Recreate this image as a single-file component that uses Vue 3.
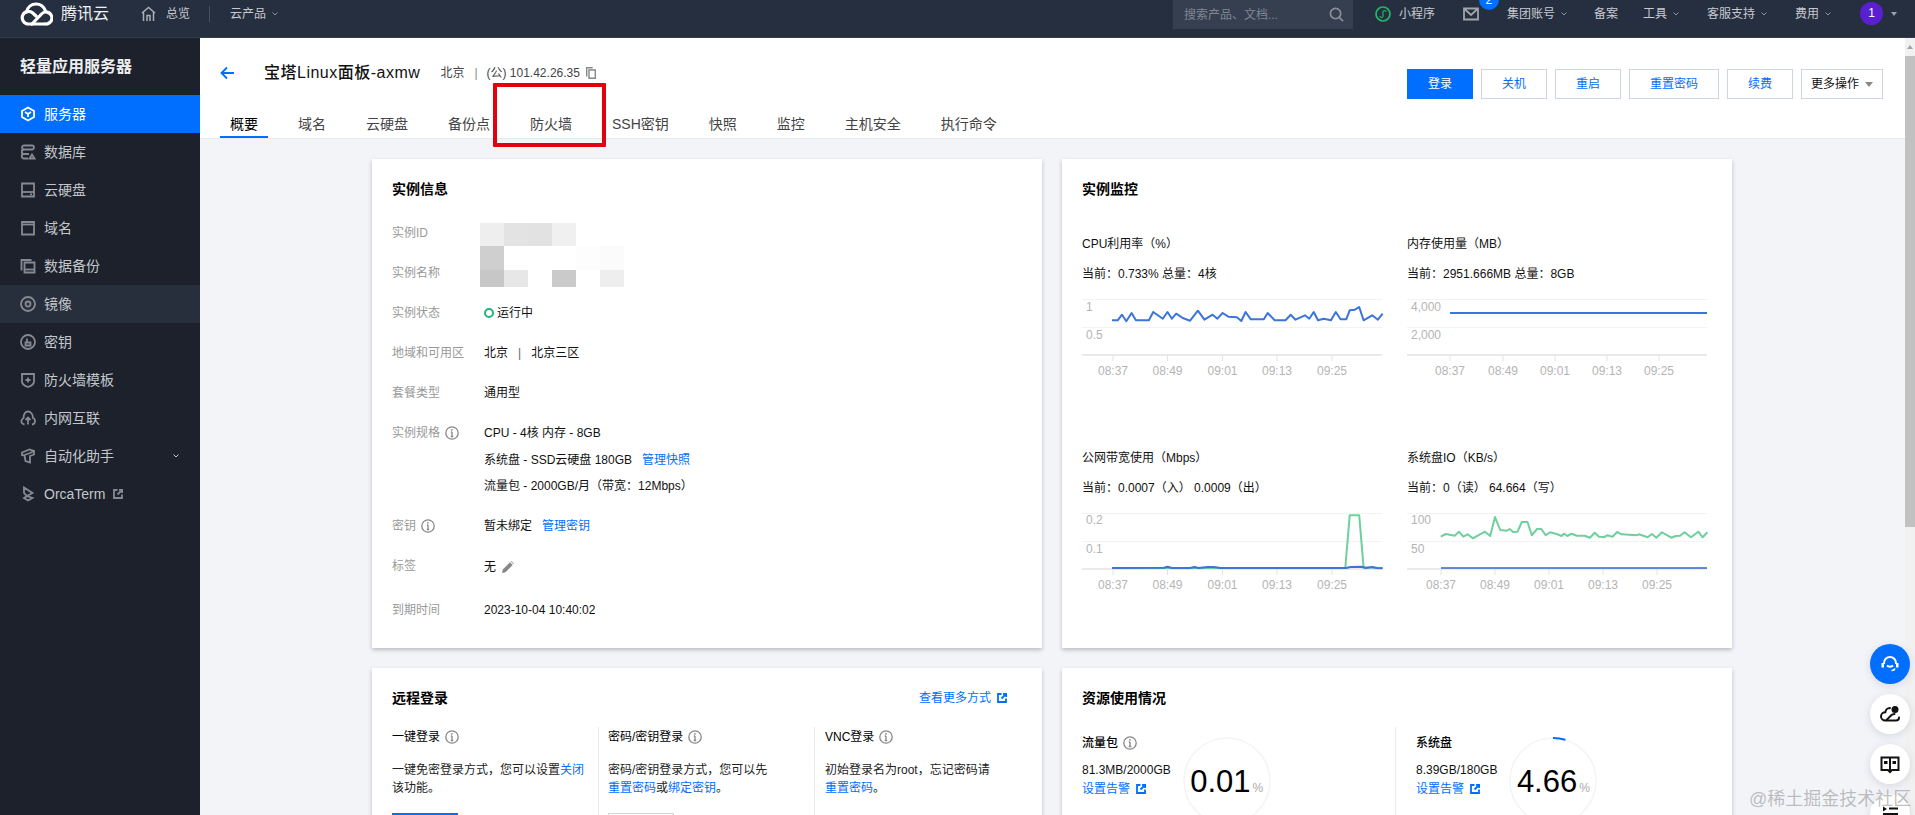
<script setup>
const menu = [
  { name: '服务器', active: true, icon: ['M8 1.5 14 5v6l-6 3.5L2 11V5z', 'M5 6l3 2 3-2M8 8v3'] },
  { name: '数据库', icon: ['M4 1.5h8a2 2 0 0 1 0 4H4a2 2 0 0 1 0-4z', 'M4 5.5a2.2 2.2 0 0 0 0 4.5h5', 'M4 10a2.2 2.2 0 0 0 0 4.5h4', 'M12 10.5l2.5 4h-5z'] },
  { name: '云硬盘', icon: ['M2 1.5h12v13H2z', 'M2 10h12', 'M10 12.3h2'] },
  { name: '域名', icon: ['M2 2h12v12.5H2z', 'M2 4.5h12', 'M5 1v2M11 1v2'] },
  { name: '数据备份', icon: ['M1.5 12.5V2h10', 'M4.5 4.5h10v10h-10z', 'M4.5 11.5h10'] },
  { name: '镜像', hover: true, icon: ['M8 1a7 7 0 1 0 0 14A7 7 0 1 0 8 1z', 'M8 5.5a2.5 2.5 0 1 0 0 5 2.5 2.5 0 1 0 0-5z'] },
  { name: '密钥', icon: ['M8 1a7 7 0 1 0 0 14A7 7 0 1 0 8 1z', 'M7 4.5v3.5', 'M5.5 8.5h5v3h-5z'] },
  { name: '防火墙模板', icon: ['M2 2h12v7.5c0 2.5-3 4.5-6 5.5-3-1-6-3-6-5.5z', 'M8 5.5v5M5.5 8h5'] },
  { name: '内网互联', icon: ['M4.5 14.5C2 14 1 12.5 1.5 10.5 2 9 3 8.5 3.5 8 3.5 4 5.5 1.5 8 1.5s5 2.5 5 6.5c1.5.5 2 2 2 3.2 0 1.6-1 3-3 3.3', 'M8 14.5V8M5.5 10 8 7.5l2.5 2.5'] },
  { name: '自动化助手', arrow: true, icon: ['M2 4.5 9.5 1.5 14 3v3.5l-4 1.5v6.5l-4.5-1.5-1-5.5L2 7z', 'M4.5 7 10 5l4-2'] },
  { name: 'OrcaTerm', ext: true, icon: ['M4 1.5 12.5 7 7 10l5.5 2-4.5 2.5L4 12l3-2-3-3z'] }
]

const tabs = ['概要', '域名', '云硬盘', '备份点', '防火墙', 'SSH密钥', '快照', '监控', '主机安全', '执行命令']
const actions = ['关机', '重启', '重置密码', '续费']

// mosaic that hides the instance id and name
const mosaicRows = [
  { h: 23, cells: ['#eeeeee', '#e3e3e3', '#e2e2e2', '#f0f0f0', '#ffffff', '#ffffff'] },
  { h: 24, cells: ['#cfcfcf', '#ffffff', '#ffffff', '#ffffff', '#fdfdfd', '#fbfbfb'] },
  { h: 17, cells: ['#c7c7c7', '#e7e7e7', '#ffffff', '#cacaca', '#ffffff', '#eeeeee'] }
]

// points were read off the reference: [x, y] in crop pixels
const toPoints = (pts, xOff, top) => pts
  .map(([x, y]) => `${(x / 2.306 - xOff).toFixed(1)},${(y / 3 + top).toFixed(1)}`)
  .join(' ')

const cpu = [[120,481],[133,481],[143,464],[153,484],[165,459],[175,481],[205,481],[215,456],[237,476],[248,456],[258,476],[268,461],[283,474],[300,482],[318,452],[333,479],[352,464],[363,476],[375,459],[388,470],[408,472],[418,483],[428,456],[440,478],[470,478],[479,459],[495,481],[520,481],[532,464],[543,479],[565,466],[575,476],[585,456],[595,481],[608,476],[625,481],[636,456],[647,478],[660,478],[668,451],[680,449],[690,441],[700,481],[720,466],[733,479],[744,461]]
const netOut = [[120,414],[658,414],[668,256],[690,256],[700,412],[744,414]]
const netIn = [[120,414],[240,413],[248,410],[258,414],[300,414],[310,411],[320,414],[340,411],[355,411],[370,414],[660,414],[670,411],[695,410],[705,414],[720,411],[730,414],[744,415]]
const diskWrite = [[878,320],[890,312],[910,317],[920,305],[930,320],[940,313],[952,325],[980,305],[992,318],[1003,261],[1015,300],[1030,302],[1037,297],[1045,306],[1055,305],[1065,276],[1078,276],[1088,316],[1100,297],[1110,297],[1120,316],[1130,307],[1145,312],[1157,318],[1162,311],[1170,318],[1180,311],[1192,317],[1210,317],[1222,323],[1233,308],[1243,320],[1255,321],[1262,316],[1274,320],[1285,306],[1295,313],[1330,316],[1335,313],[1355,322],[1365,312],[1375,323],[1388,307],[1410,323],[1420,318],[1430,317],[1440,307],[1455,322],[1472,305],[1482,322],[1493,307]]

const BLUE = '#3b74dc'
const GREEN = '#6fcf9d'

const charts = [
  {
    title: 'CPU利用率\uFF08%\uFF09',
    sub: '当前\uFF1A0.733% 总量\uFF1A4核',
    yLabels: [['1', 12], ['0.5', 40]],
    ticks: [31, 85.5, 140.5, 195, 250],
    lines: [{ color: BLUE, width: 2, points: toPoints(cpu, 22, -135) }]
  },
  {
    title: '内存使用量\uFF08MB\uFF09',
    sub: '当前\uFF1A2951.666MB 总量\uFF1A8GB',
    yLabels: [['4,000', 12], ['2,000', 40]],
    ticks: [43, 96, 148, 200, 252],
    lines: [{ color: BLUE, width: 2, points: '43,18 300,18' }]
  },
  {
    title: '公网带宽使用\uFF08Mbps\uFF09',
    sub: '当前\uFF1A0.0007\uFF08入\uFF09 0.0009\uFF08出\uFF09',
    yLabels: [['0.2', 11], ['0.1', 40]],
    ticks: [31, 85.5, 140.5, 195, 250],
    lines: [
      { color: GREEN, width: 2, points: toPoints(netOut, 22, -79) },
      { color: BLUE, width: 2, points: toPoints(netIn, 22, -79) }
    ]
  },
  {
    title: '系统盘IO\uFF08KB/s\uFF09',
    sub: '当前\uFF1A0\uFF08读\uFF09 64.664\uFF08写\uFF09',
    yLabels: [['100', 11], ['50', 40]],
    ticks: [34, 88, 142, 196, 250],
    lines: [
      { color: GREEN, width: 2, points: toPoints(diskWrite, 347, -79) },
      { color: '#2f66cc', width: 1.5, points: '34,59 300,59' }
    ]
  }
]
const times = ['08:37', '08:49', '09:01', '09:13', '09:25']
</script>

<template>
  <div class="app">
    <svg class="defs" aria-hidden="true">
      <symbol id="i-info" viewBox="0 0 14 14">
        <circle cx="7" cy="7" r="6.2" fill="none" stroke="#888" stroke-width="1.3" />
        <path d="M7 6v4.5M5.8 10.5h2.4M5.8 6H7" fill="none" stroke="#888" stroke-width="1.3" />
        <circle cx="7" cy="3.8" r=".9" fill="#888" />
      </symbol>
      <symbol id="i-ext" viewBox="0 0 10 10">
        <path d="M4.5 1H1v8h8V5.5" fill="none" stroke="currentColor" stroke-width="1.8" />
        <path d="M6 .8h3.2V4M9 1 4.5 5.5" fill="none" stroke="currentColor" stroke-width="1.8" />
      </symbol>
      <symbol id="i-chev" viewBox="0 0 6 4">
        <path d="M.5.5 3 3 5.5.5" fill="none" stroke="currentColor" stroke-width="1" />
      </symbol>
    </svg>

    <header class="topbar">
      <svg class="logo" viewBox="0 0 33 24" fill="none" stroke="#fff" stroke-width="3.2" stroke-linecap="round">
        <path d="M6.5 10C7.5 5 11.5 2 16 2s8 3 9.5 7" />
        <path d="M25 22H8.5a6.3 6.3 0 1 1 4-11.2L16 14" />
        <path d="M12 22l9.5-10a6 6 0 1 1 4 10" />
      </svg>
      <span class="brand">腾讯云</span>
      <svg class="home" viewBox="0 0 15 16" fill="none" stroke="#a9aeb6" stroke-width="1.5">
        <path d="M1 7 7.5 1.5 14 7M2.5 6v9M12.5 6v9M6 15V9.5h3V15" />
      </svg>
      <span class="nav-text overview">总览</span>
      <span class="nav-divider"></span>
      <span class="nav-text products">云产品</span>
      <svg class="chev"><use href="#i-chev" /></svg>

      <div class="search">
        <span>搜索产品、文档...</span>
        <svg viewBox="0 0 16 16" fill="none" stroke="#8a909a" stroke-width="1.8">
          <circle cx="7" cy="7" r="5.5" />
          <path d="M11 11l4 4" />
        </svg>
      </div>
      <svg class="wechat" viewBox="0 0 16 16" fill="none" stroke="#21b968" stroke-width="1.7">
        <circle cx="8" cy="8" r="7" />
        <path d="M5 10c0 2 3 2 3 0V6c0-2 3-2 3 0" stroke-width="1.2" />
      </svg>
      <span class="nav-text mini">小程序</span>
      <div class="mail">
        <svg viewBox="0 0 16 16" fill="none" stroke="#a0a5ad" stroke-width="1.8">
          <path d="M1 2.5h14v11H1zM1.5 3 8 9l6.500-6" />
        </svg>
        <span class="badge">2</span>
      </div>
      <span class="nav-text nav-item">集团账号</span>
      <svg class="chev"><use href="#i-chev" /></svg>
      <span class="nav-text nav-item filing">备案</span>
      <span class="nav-text nav-item tools">工具</span>
      <svg class="chev"><use href="#i-chev" /></svg>
      <span class="nav-text nav-item">客服支持</span>
      <svg class="chev"><use href="#i-chev" /></svg>
      <span class="nav-text nav-item">费用</span>
      <svg class="chev"><use href="#i-chev" /></svg>
      <span class="avatar">1</span>
      <span class="caret"></span>
    </header>

    <div class="body">
      <aside class="sidebar">
        <div class="side-title">轻量应用服务器</div>
        <div
          v-for="item in menu"
          :key="item.name"
          :class="['side-item', { active: item.active, hover: item.hover }]"
        >
          <svg class="side-icon" viewBox="0 0 16 16" fill="none" stroke="currentColor" stroke-width="1.8">
            <path v-for="d in item.icon" :key="d" :d="d" />
          </svg>
          <span>{{ item.name }}</span>
          <svg v-if="item.ext" class="side-ext"><use href="#i-ext" /></svg>
          <svg v-if="item.arrow" class="side-arrow"><use href="#i-chev" /></svg>
        </div>
      </aside>

      <main class="main">
        <section class="head">
          <div class="head-top">
            <div class="crumb">
              <svg class="back" viewBox="0 0 14 14" fill="none" stroke="#006eff" stroke-width="1.8">
                <path d="M14 7H1.5M7 1.5 1.5 7 7 12.5" />
              </svg>
              <span class="name">宝塔Linux面板-axmw</span>
              <span class="region">北京</span>
              <span class="sep">|</span>
              <span>(公) 101.42.26.35</span>
              <svg class="copy" viewBox="0 0 10 12" fill="none" stroke="#888" stroke-width="1.4">
                <path d="M.7 9.5V.7h6" />
                <path d="M3 3h6.3v8.3H3z" />
              </svg>
            </div>
            <div class="actions">
              <button class="btn primary">登录</button>
              <button v-for="a in actions" :key="a" class="btn">{{ a }}</button>
              <button class="btn more">更多操作<span class="more-caret"></span></button>
            </div>
          </div>
          <nav class="tabs">
            <span v-for="(t, i) in tabs" :key="t" :class="['tab', { current: i === 0 }]">{{ t }}</span>
          </nav>
          <div class="mark"></div>
        </section>

        <section class="content">
          <div class="card tall info-card">
            <h3>实例信息</h3>
            <div class="mosaic">
              <div v-for="(r, i) in mosaicRows" :key="i" class="mosaic-row" :style="{ height: r.h + 'px' }">
                <i v-for="(c, j) in r.cells" :key="j" :style="{ background: c }"></i>
              </div>
            </div>
            <div class="row"><label>实例ID</label></div>
            <div class="row"><label>实例名称</label></div>
            <div class="row">
              <label>实例状态</label>
              <div class="val"><i class="ring"></i>运行中</div>
            </div>
            <div class="row">
              <label>地域和可用区</label>
              <div class="val">北京<span class="val-sep">|</span>北京三区</div>
            </div>
            <div class="row">
              <label>套餐类型</label>
              <div class="val">通用型</div>
            </div>
            <div class="row">
              <label>实例规格<svg class="info"><use href="#i-info" /></svg></label>
              <div class="val">
                <div>CPU - 4核 内存 - 8GB</div>
                <div class="sub-line">系统盘 - SSD云硬盘 180GB<a class="link spaced">管理快照</a></div>
                <div class="sub-line">流量包 - 2000GB/月&#xFF08;带宽&#xFF1A;12Mbps&#xFF09;</div>
              </div>
            </div>
            <div class="row">
              <label>密钥<svg class="info"><use href="#i-info" /></svg></label>
              <div class="val">暂未绑定<a class="link spaced">管理密钥</a></div>
            </div>
            <div class="row tag-row">
              <label>标签</label>
              <div class="val">
                无
                <svg class="pen" viewBox="0 0 12 12" fill="#888">
                  <path d="M0 12l.8-3.5L8 1.3l2.7 2.7-7.2 7.2zM8.8.5 9.3 0 12 2.7l-.5.5z" />
                </svg>
              </div>
            </div>
            <div class="row">
              <label>到期时间</label>
              <div class="val">2023-10-04 10:40:02</div>
            </div>
          </div>

          <div class="card tall">
            <h3>实例监控</h3>
            <div class="charts">
              <div v-for="c in charts" :key="c.title" class="chart">
                <div class="chart-title">{{ c.title }}</div>
                <div class="chart-sub">{{ c.sub }}</div>
                <svg class="plot" viewBox="0 0 300 90" width="300" height="90">
                  <path d="M0 4.5h300M0 32.5h300" stroke="#f3f3f3" fill="none" />
                  <path d="M0 60h300" stroke="#e3e3e3" stroke-width="1.5" fill="none" />
                  <text v-for="l in c.yLabels" :key="l[0]" x="4" :y="l[1] + 4" class="axis">{{ l[0] }}</text>
                  <g v-for="(x, i) in c.ticks" :key="x">
                    <path :d="`M${x} 60v6`" stroke="#e3e3e3" fill="none" />
                    <text :x="x" y="80" text-anchor="middle" class="axis">{{ times[i] }}</text>
                  </g>
                  <polyline
                    v-for="l in c.lines"
                    :key="l.color"
                    :points="l.points"
                    :stroke="l.color"
                    :stroke-width="l.width"
                    fill="none"
                    stroke-linejoin="round"
                  />
                </svg>
              </div>
            </div>
          </div>

          <div class="card">
            <div class="card-head">
              <h3>远程登录</h3>
              <a class="link more-way">查看更多方式<svg class="ext"><use href="#i-ext" /></svg></a>
            </div>
            <div class="logins">
              <div class="login first">
                <div class="login-title">一键登录<svg class="info"><use href="#i-info" /></svg></div>
                <p>一键免密登录方式&#xFF0C;您可以设置<a class="link">关闭</a><br />该功能。</p>
                <button class="login-btn solid"></button>
              </div>
              <div class="login second">
                <div class="login-title">密码/密钥登录<svg class="info"><use href="#i-info" /></svg></div>
                <p>密码/密钥登录方式&#xFF0C;您可以先<br /><a class="link">重置密码</a>或<a class="link">绑定密钥</a>。</p>
                <button class="login-btn"></button>
              </div>
              <div class="login">
                <div class="login-title">VNC登录<svg class="info"><use href="#i-info" /></svg></div>
                <p>初始登录名为root&#xFF0C;忘记密码请<br /><a class="link">重置密码</a>。</p>
              </div>
            </div>
          </div>

          <div class="card">
            <h3>资源使用情况</h3>
            <div class="resources">
              <div class="res traffic">
                <div class="res-text">
                  <div class="res-title">流量包<svg class="info"><use href="#i-info" /></svg></div>
                  <div class="res-num">81.3MB/2000GB</div>
                  <a class="link res-link">设置告警<svg class="ext"><use href="#i-ext" /></svg></a>
                </div>
                <div class="gauge">
                  <svg viewBox="0 0 88 88" fill="none">
                    <circle cx="44" cy="44" r="43" stroke="#f4f4f4" stroke-width="1.5" />
                  </svg>
                  <b>0.01</b><small>%</small>
                </div>
              </div>
              <div class="res disk">
                <div class="res-text">
                  <div class="res-title">系统盘</div>
                  <div class="res-num">8.39GB/180GB</div>
                  <a class="link res-link">设置告警<svg class="ext"><use href="#i-ext" /></svg></a>
                </div>
                <div class="gauge">
                  <svg viewBox="0 0 88 88" fill="none">
                    <circle cx="44" cy="44" r="43" stroke="#f4f4f4" stroke-width="1.5" />
                    <path d="M44 1A43 43 0 0 1 56.4 2.8" stroke="#006eff" stroke-width="2" />
                  </svg>
                  <b>4.66</b><small>%</small>
                </div>
              </div>
            </div>
          </div>
        </section>
      </main>

      <div class="scrollbar">
        <i class="scroll-up"></i>
        <i class="scroll-thumb"></i>
      </div>
    </div>

    <div class="floats">
      <div class="float blue">
        <svg viewBox="0 0 20 20" fill="none" stroke="#fff" stroke-width="2">
          <path d="M4 10V9a6 6 0 0 1 12 0v1" />
          <path d="M1.5 9H4v4.5H1.5zM16 9h2.5v4.5H16z" fill="#fff" stroke="none" />
          <path d="M7 11.5c1.5 1.5 4.5 1.500 6 0" />
          <path d="M15 14.500c-.5 1.5-2 2-3.500 2" stroke-width="1.5" />
        </svg>
      </div>
      <div class="float">
        <svg viewBox="0 0 22 20" fill="none" stroke="#111" stroke-width="2" stroke-linecap="round">
          <path d="M11 4C8.5 4 6.5 6 6.3 8.3 4 8.3 2 10 2 12.300S4 16.500 6.300 16.500H17c1.500 0 3-1 3-3" />
          <path d="M7.500 16l4.500-4.500c1-1 2.500-1.500 3.500-1.500" />
          <circle cx="16" cy="5.5" r="3.5" fill="#111" stroke="none" />
        </svg>
      </div>
      <div class="float">
        <svg viewBox="0 0 20 20" fill="none" stroke="#111" stroke-width="2">
          <path d="M1.5 3.5h17V16h-6.500L10 18l-2-2H1.500zM10 3.500v14" />
          <path d="M4 7h3.5v3H4zM12.500 7H16v3h-3.500z" fill="#111" stroke="none" />
        </svg>
      </div>
      <div class="float">
        <svg viewBox="0 0 20 20" fill="#111">
          <path d="M3 2.5 7 5 3 7.5zM9 3.5h9v2H9zM3 9h15v2H3z" />
        </svg>
      </div>
    </div>
    <div class="watermark">@稀土掘金技术社区</div>
  </div>
</template>

<style scoped>
.app {
  position: relative;
  height: 815px;
  overflow: hidden;
  display: flex;
  flex-direction: column;
  background: #f3f4f8;
  color: #111;
  font: 12px/20px "Liberation Sans", "Noto Sans CJK SC", sans-serif;
}

.defs {
  position: absolute;
  width: 0;
  height: 0;
}

/* top bar */
.topbar {
  flex: none;
  height: 38px;
  box-sizing: border-box;
  padding: 0 18px 10px 20px;
  display: flex;
  align-items: center;
  background: #262f3f;
  border-bottom: 1px solid #333c4b;
  overflow: hidden;
}

.logo {
  width: 33px;
  height: 24px;
}

.brand {
  margin-left: 8px;
  font-size: 16px;
  color: #eef0f2;
}

.home {
  width: 15px;
  height: 16px;
  margin-left: 32px;
}

.nav-text {
  color: #c6cad0;
  white-space: nowrap;
}

.overview {
  margin-left: 10px;
}

.nav-divider {
  width: 1px;
  height: 16px;
  background: #465061;
  margin: 0 20px 0 19px;
}

.chev {
  flex: none;
  width: 6px;
  height: 4px;
  margin-left: 6px;
  color: #8d939d;
}

.search {
  align-self: flex-start;
  margin-left: auto;
  width: 180px;
  height: 29px;
  box-sizing: border-box;
  padding: 0 9px 0 11px;
  display: flex;
  align-items: center;
  justify-content: space-between;
  background: #363f50;
  color: #7f8691;
}

.search svg {
  width: 15px;
  height: 15px;
}

.wechat {
  width: 16px;
  height: 16px;
  margin-left: 22px;
}

.mini {
  margin-left: 8px;
}

.mail {
  position: relative;
  width: 16px;
  height: 16px;
  margin-left: 28px;
}

.mail svg {
  display: block;
  width: 16px;
  height: 16px;
}

.badge {
  position: absolute;
  left: 16px;
  top: -16px;
  width: 20px;
  height: 20px;
  border-radius: 50%;
  background: #006eff;
  color: #fff;
  text-align: center;
}

.nav-item {
  margin-left: 28px;
}

.filing {
  margin-left: 27px;
}

.tools {
  margin-left: 25px;
}

.avatar {
  width: 23px;
  height: 23px;
  margin-left: 29px;
  border-radius: 50%;
  background: #5a1fd1;
  color: #fff;
  text-align: center;
  line-height: 23px;
}

.caret {
  width: 0;
  height: 0;
  margin-left: 8px;
  border: 3px solid transparent;
  border-top: 4px solid #9aa0a9;
  border-bottom: 0;
}

/* sidebar */
.body {
  flex: 1;
  min-height: 0;
  display: flex;
}

.sidebar {
  flex: none;
  width: 200px;
  background: #1c212c;
  color: #c3c7cb;
  font-size: 14px;
}

.side-title {
  height: 57px;
  box-sizing: border-box;
  padding: 17px 20px 0;
  font-size: 16px;
  font-weight: 700;
  line-height: 24px;
  color: #eceef0;
}

.side-item {
  height: 38px;
  padding-left: 20px;
  display: flex;
  align-items: center;
}

.side-item.active {
  background: #006eff;
  color: #fff;
}

.side-item.hover {
  background: #282f3c;
}

.side-icon {
  width: 16px;
  height: 16px;
  margin-right: 8px;
  color: #858a92;
}

.active .side-icon {
  color: #fff;
}

.side-ext {
  width: 10px;
  height: 10px;
  margin-left: 8px;
  color: #858a92;
}

.side-arrow {
  width: 6px;
  height: 4px;
  margin-left: auto;
  margin-right: 21px;
  color: #c3c7cb;
}

/* main header */
.main {
  flex: 1;
  min-width: 0;
  display: flex;
  flex-direction: column;
}

.head {
  position: relative;
  flex: none;
  background: #fff;
  border-bottom: 1px solid #e7eaef;
}

.head-top {
  display: flex;
  justify-content: space-between;
  align-items: flex-start;
  padding: 20px 22px 0 20px;
}

.crumb {
  height: 30px;
  display: flex;
  align-items: center;
  color: #444;
}

.back {
  width: 14px;
  height: 14px;
  margin-right: 30px;
}

.name {
  margin-right: 20px;
  font-size: 16px;
  font-weight: 500;
  letter-spacing: 0.5px;
  color: #111;
  white-space: nowrap;
}

.sep {
  margin: 0 9px 0 10px;
  color: #888;
}

.copy {
  width: 10px;
  height: 12px;
  margin-left: 6px;
}

.actions {
  margin-top: 11px;
  display: flex;
  gap: 8px;
}

.btn {
  width: 66px;
  height: 30px;
  padding: 0;
  box-sizing: border-box;
  border: 1px solid #cfd5de;
  background: #fff;
  color: #006eff;
  font: inherit;
}

.btn:nth-child(4) {
  width: 90px;
}

.btn.primary {
  border-color: #006eff;
  background: #006eff;
  color: #fff;
}

.btn.more {
  width: 82px;
  color: #111;
  display: flex;
  align-items: center;
  justify-content: center;
  gap: 6px;
}

.more-caret {
  width: 0;
  height: 0;
  border: 4px solid transparent;
  border-top: 5px solid #888;
  border-bottom: 0;
}

.tabs {
  display: flex;
  gap: 20px;
  padding-left: 20px;
  font-size: 14px;
  color: #444;
}

.tab {
  padding: 15px 10px 2px;
  border-bottom: 2px solid transparent;
}

.tab.current {
  border-bottom-color: #006eff;
  color: #000;
}

/* red box drawn over the screenshot */
.mark {
  position: absolute;
  left: 293px;
  top: 45px;
  width: 113px;
  height: 64px;
  box-sizing: border-box;
  border: 4px solid #e5000f;
  border-radius: 1px;
}

/* cards */
.content {
  padding: 20px 0 0 172px;
  display: grid;
  grid-template-columns: 670px 670px;
  gap: 20px;
}

.card {
  position: relative;
  box-sizing: border-box;
  padding: 20px;
  background: #fff;
  box-shadow: 0 2px 4px rgba(54, 58, 80, 0.3);
  min-height: 200px;
}

.card.tall {
  height: 489px;
}

h3 {
  margin: 0;
  font-size: 14px;
  line-height: 20px;
  font-weight: 700;
  color: #000;
}

.info-card h3 {
  margin-bottom: 24px;
}

.mosaic {
  position: absolute;
  left: 108px;
  top: 64px;
}

.mosaic-row {
  display: flex;
}

.mosaic-row i {
  width: 24px;
}

.row {
  display: flex;
  margin-bottom: 20px;
  min-height: 20px;
}

.row label {
  flex: none;
  width: 92px;
  display: flex;
  align-items: flex-start;
  color: #999;
}

.info {
  flex: none;
  width: 14px;
  height: 14px;
  margin: 3px 0 0 5px;
}

.val {
  color: #111;
}

.ring {
  display: inline-block;
  width: 10px;
  height: 10px;
  box-sizing: border-box;
  margin: 0 3px 0 0;
  border: 2px solid #1fb57b;
  border-radius: 50%;
  vertical-align: -1px;
}

.val-sep {
  margin: 0 10px;
  color: #666;
}

.sub-line {
  margin-top: 6.5px;
}

.link {
  color: #006eff;
}

.spaced {
  margin-left: 10px;
}

.tag-row {
  min-height: 24px;
}

.tag-row .val {
  display: flex;
  align-items: center;
  height: 22px;
}

.pen {
  width: 12px;
  height: 12px;
  margin-left: 6px;
}

/* monitor */
.charts {
  margin-top: 35px;
  display: grid;
  grid-template-columns: 300px 300px;
  column-gap: 25px;
}

.chart {
  height: 214px;
}

.chart-sub {
  margin: 10px 0 11px;
}

.plot {
  display: block;
  overflow: visible;
}

.axis {
  font-size: 12px;
  fill: #b4b4b4;
}

/* remote login */
.card-head {
  display: flex;
  justify-content: space-between;
  padding-right: 15px;
}

.more-way,
.res-link {
  display: flex;
  align-items: center;
}

.ext {
  width: 10px;
  height: 10px;
  margin-left: 6px;
  color: #006eff;
}

.logins {
  margin-top: 19px;
  display: flex;
}

.login {
  padding-left: 10px;
  height: 140px;
}

.login.first {
  flex: none;
  width: 207px;
  box-sizing: border-box;
  padding-left: 0;
  border-right: 1px solid #e7eaef;
}

.login.second {
  flex: none;
  width: 216px;
  box-sizing: border-box;
  padding-left: 9px;
  border-right: 1px solid #e7eaef;
}

.login-title {
  display: flex;
  align-items: flex-start;
  color: #000;
}

.login p {
  margin: 14px 0 16px;
  line-height: 18px;
  color: #222;
}

.login-btn {
  display: block;
  width: 66px;
  height: 30px;
  border: 1px solid #cfd5de;
  background: #fff;
}

.login-btn.solid {
  border-color: #006eff;
  background: #006eff;
}

/* resources */
.resources {
  margin-top: 19px;
  display: flex;
}

.res {
  display: flex;
  gap: 12px;
  padding-top: 6px;
  height: 140px;
}

.traffic {
  flex: none;
  width: 314px;
  box-sizing: border-box;
  border-right: 1px solid #e7eaef;
}

.disk {
  padding-left: 20px;
}

.res-title {
  display: flex;
  color: #000;
  font-weight: 500;
}

.res-num {
  margin-top: 8px;
  line-height: 18px;
}

.res-link {
  margin-top: 1px;
  line-height: 18px;
}

.gauge {
  position: relative;
  flex: none;
  width: 88px;
  height: 88px;
  margin-top: 4px;
  display: flex;
  align-items: baseline;
  justify-content: center;
  line-height: 90px;
}

.gauge svg {
  position: absolute;
  left: 0;
  top: 0;
  width: 88px;
  height: 88px;
}

.gauge b {
  font-size: 31px;
  font-weight: 400;
  color: #000;
}

.gauge small {
  margin-left: 2px;
  font-size: 12px;
  color: #aaa;
}

/* fake scrollbar */
.scrollbar {
  flex: none;
  width: 10px;
  display: flex;
  flex-direction: column;
  align-items: center;
  background: #f1f1f1;
}

.scroll-up {
  margin-top: 7px;
  width: 0;
  height: 0;
  border: 3.5px solid transparent;
  border-bottom: 4px solid #a3a3a3;
  border-top: 0;
}

.scroll-thumb {
  width: 10px;
  height: 471px;
  margin-top: 7px;
  background: #c1c1c1;
}

/* floating helpers */
.floats {
  position: absolute;
  left: 1870px;
  top: 644px;
  display: flex;
  flex-direction: column;
  gap: 10px;
}

.float {
  width: 40px;
  height: 40px;
  flex: none;
  border-radius: 50%;
  background: #fff;
  box-shadow: 0 2px 8px rgba(54, 58, 80, 0.15);
  display: flex;
  align-items: center;
  justify-content: center;
}

.float.blue {
  background: #006eff;
}

.float svg {
  width: 22px;
  height: 20px;
}

.watermark {
  position: absolute;
  left: 1749px;
  top: 787px;
  font-size: 18px;
  line-height: 24px;
  color: rgba(150, 150, 150, 0.6);
  white-space: nowrap;
}
</style>

<style>
html,
body {
  margin: 0;
  overflow: hidden;
}
</style>
